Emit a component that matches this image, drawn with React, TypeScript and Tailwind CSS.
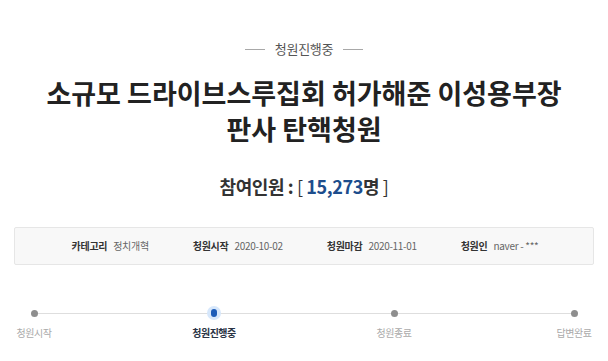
const steps = [
  { label: "청원시작", active: false },
  { label: "청원진행중", active: true },
  { label: "청원종료", active: false },
  { label: "답변완료", active: false },
];

const info = [
  { label: "카테고리", value: "정치개혁" },
  { label: "청원시작", value: "2020-10-02" },
  { label: "청원마감", value: "2020-11-01" },
  { label: "청원인", value: "naver - ***" },
];

function App() {
  return (
    <div
      className="w-[608px] h-[361px] bg-white flex flex-col items-center overflow-hidden"
      style={{ fontFamily: '"Noto Sans CJK KR", "Noto Sans", sans-serif' }}
    >
      <div className="mt-[39px] h-[20px] flex items-center gap-[10px]">
        <span className="w-[20px] h-px bg-[#a8a8a8]" />
        <span className="text-[13px] leading-[20px] text-[#555] tracking-[-0.3px]">청원진행중</span>
        <span className="w-[20px] h-px bg-[#a8a8a8]" />
      </div>

      <h1 className="mt-[16px] text-[27px] leading-[36px] font-bold text-[#222] text-center whitespace-nowrap">
        소규모 드라이브스루집회 허가해준 이성용부장
        <br />
        판사 탄핵청원
      </h1>

      <div className="mt-[26px] text-[18px] leading-[26px] font-bold text-[#333] tracking-[-0.4px]">
        참여인원 : <span className="font-normal">[</span>{" "}
        <span className="text-[#1d4d8c]">15,273</span>명{" "}
        <span className="font-normal">]</span>
      </div>

      <div className="mt-[28px] self-stretch mx-[14px] h-[38px] bg-[#f8f8f8] border border-[#e6e6e6] rounded-[2px] flex items-center justify-center gap-[44px] pl-[2px]">
        {info.map((item) => (
          <div key={item.label} className="flex items-center gap-[6px] text-[10px] leading-[14px] tracking-[-0.3px]">
            <span className="font-bold text-[#333]">{item.label}</span>
            <span className="text-[#666]">{item.value}</span>
          </div>
        ))}
      </div>

      <div className="relative mt-[41px] self-stretch px-[9px] flex justify-between">
        <div className="absolute top-[7px] left-[34px] right-[34px] h-px bg-[#dedede]" />
        {steps.map((step) => (
          <div key={step.label} className="relative w-[50px] flex flex-col items-center">
            <div className="h-[14px] w-[14px] flex items-center justify-center">
              {step.active ? (
                <span className="w-[14px] h-[14px] rounded-full bg-[#d6e7fb] flex items-center justify-center">
                  <span className="w-[6px] h-[8px] rounded-full bg-[#1b5bb8]" />
                </span>
              ) : (
                <span className="w-[7px] h-[7px] rounded-full bg-[#8e8e8e]" />
              )}
            </div>
            <span
              className={
                step.active
                  ? "mt-[6px] text-[10px] leading-[14px] font-bold text-[#2a3445] tracking-[-0.5px] whitespace-nowrap"
                  : "mt-[6px] text-[10px] leading-[14px] text-[#aaa] tracking-[-0.5px] whitespace-nowrap"
              }
            >
              {step.label}
            </span>
          </div>
        ))}
      </div>
    </div>
  );
}

export default App;
